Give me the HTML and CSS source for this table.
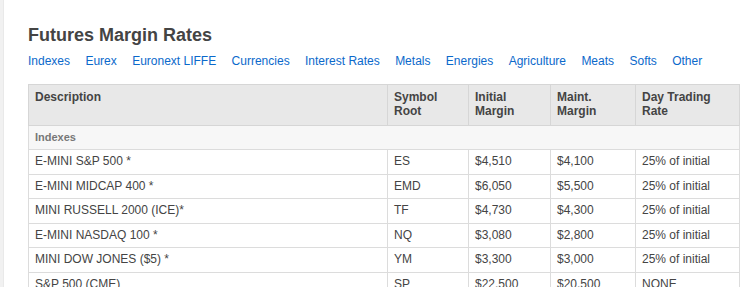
FILE: index.html
```html
<!DOCTYPE html>
<html lang="en">
<head>
<meta charset="utf-8">
<title>Futures Margin Rates</title>
<link rel="stylesheet" href="styles.css">
</head>
<body>
<div class="page">
  <div class="strip"></div>
  <main class="main">
    <h1 class="title">Futures Margin Rates</h1>
    <nav class="tabs">
      <a href="#" class="tab">Indexes</a>
      <a href="#" class="tab">Eurex</a>
      <a href="#" class="tab">Euronext LIFFE</a>
      <a href="#" class="tab">Currencies</a>
      <a href="#" class="tab">Interest Rates</a>
      <a href="#" class="tab">Metals</a>
      <a href="#" class="tab">Energies</a>
      <a href="#" class="tab">Agriculture</a>
      <a href="#" class="tab">Meats</a>
      <a href="#" class="tab">Softs</a>
      <a href="#" class="tab">Other</a>
    </nav>
    <table class="rates">
      <colgroup>
        <col class="c-desc">
        <col class="c-sym">
        <col class="c-init">
        <col class="c-maint">
        <col class="c-day">
      </colgroup>
      <thead>
        <tr>
          <th>Description</th>
          <th>Symbol<br>Root</th>
          <th>Initial<br>Margin</th>
          <th>Maint.<br>Margin</th>
          <th>Day Trading<br>Rate</th>
        </tr>
      </thead>
      <tbody>
        <tr class="group"><td colspan="5">Indexes</td></tr>
        <tr><td>E-MINI S&amp;P 500 *</td><td>ES</td><td>$4,510</td><td>$4,100</td><td>25% of initial</td></tr>
        <tr><td>E-MINI MIDCAP 400 *</td><td>EMD</td><td>$6,050</td><td>$5,500</td><td>25% of initial</td></tr>
        <tr><td>MINI RUSSELL 2000 (ICE)*</td><td>TF</td><td>$4,730</td><td>$4,300</td><td>25% of initial</td></tr>
        <tr><td>E-MINI NASDAQ 100 *</td><td>NQ</td><td>$3,080</td><td>$2,800</td><td>25% of initial</td></tr>
        <tr><td>MINI DOW JONES ($5) *</td><td>YM</td><td>$3,300</td><td>$3,000</td><td>25% of initial</td></tr>
        <tr><td>S&amp;P 500 (CME)</td><td>SP</td><td>$22,500</td><td>$20,500</td><td>NONE</td></tr>
        <tr><td>NASDAQ 100 (CME)</td><td>ND</td><td>$15,400</td><td>$14,000</td><td>NONE</td></tr>
      </tbody>
    </table>
  </main>
</div>
</body>
</html>
```
FILE: styles.css
```css
html, body {
  margin: 0;
  padding: 0;
  background: #fff;
  overflow: hidden;
  height: 287px;
}

body {
  font-family: "Liberation Sans", Arial, sans-serif;
  color: #444;
}

.page {
  display: flex;
  align-items: stretch;
  min-height: 287px;
}

.strip {
  width: 3px;
  flex: 0 0 3px;
  background: #f1f1f1;
  border-right: 1px solid #e9e9e9;
}

.main {
  padding: 25px 0 0 24px;
}

.title {
  margin: 0;
  font-size: 18px;
  line-height: 21px;
  font-weight: bold;
  color: #444;
}

.tabs {
  display: flex;
  gap: 15.4px;
  margin-top: 8px;
  font-size: 12px;
  line-height: 14px;
}

.tab {
  color: #0b69cb;
  text-decoration: none;
}

.rates {
  margin-top: 16px;
  border-collapse: collapse;
  table-layout: fixed;
  width: 711px;
  font-size: 12px;
  border: 1px solid #d6d6d6;
}

.c-desc { width: 359px; }
.c-sym { width: 81px; }
.c-init { width: 82px; }
.c-maint { width: 85px; }
.c-day { width: 104px; }

.rates th {
  background: #e8e8e8;
  text-align: left;
  vertical-align: top;
  font-weight: bold;
  color: #444;
  padding: 6px 6px;
  line-height: 13.8px;
  border: 1px solid #d6d6d6;
}

.rates td {
  padding: 5px 6px;
  line-height: 13.5px;
  color: #444;
  border: 1px solid #dcdcdc;
  white-space: nowrap;
}

.rates .group td {
  background: #f7f7f7;
  font-weight: bold;
  font-size: 11px;
  color: #777;
}
```
